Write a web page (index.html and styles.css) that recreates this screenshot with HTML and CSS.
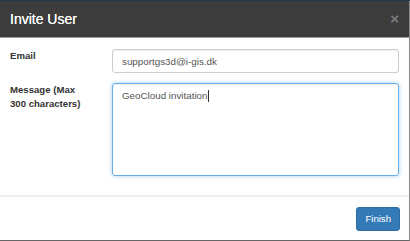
FILE: index.html
```html
<!DOCTYPE html>
<html lang="en">
<head>
  <meta charset="UTF-8" />
  <title>Invite User</title>
  <link rel="stylesheet" href="styles.css">
</head>
<body>
  <div class="modal">
    <div class="modal-header">
      <h4 class="modal-title">Invite User</h4>
      <button class="close" type="button">&times;</button>
    </div>

    <div class="modal-body">
      <div class="form-row">
        <label for="email">Email</label>
        <input type="text" id="email" class="form-control" value="supportgs3d@i-gis.dk" />
      </div>
      <div class="form-row">
        <label for="message">Message (Max 300 characters)</label>
        <div class="form-control textarea focused">GeoCloud invitation<span class="caret"></span></div>
      </div>
    </div>

    <div class="modal-footer">
      <button class="btn-primary" type="button">Finish</button>
    </div>
  </div>
</body>
</html>
```

FILE: styles.css
```css
html, body {
  margin: 0;
  padding: 0;
}

body {
  background: #1e3a55;
  font-family: "Liberation Sans", Arial, sans-serif;
  font-size: 9.6px;
  line-height: 13.7px;
  color: #333;
  width: 410px;
  height: 241px;
  overflow: hidden;
}

.modal {
  margin-top: 1px;
  width: 409px;
  height: 239px;
  background: #fff;
  border-right: 1px solid #8a8a8a;
  border-bottom: 1px solid #666;
  display: flex;
  flex-direction: column;
}

.modal-header {
  height: 36px;
  background: #3c3c3c;
  border-bottom: 1px solid #9a9a9a;
  display: flex;
  align-items: center;
  justify-content: space-between;
  padding: 0 10px;
}

.modal-title {
  margin: 0;
  color: #fff;
  font-size: 14px;
  font-weight: normal;
  line-height: 16px;
  text-shadow: 0 0 0.4px #fff;
}

.close {
  background: none;
  border: none;
  padding: 0;
  color: #7c7c7c;
  font-family: "Liberation Sans", Arial, sans-serif;
  font-size: 15px;
  font-weight: bold;
  line-height: 16px;
}

.modal-body {
  padding: 11px 10px 0 10px;
  display: flex;
  flex-direction: column;
  gap: 10px;
  height: 146px;
  border-bottom: 2px solid #eee;
}

.form-row {
  display: grid;
  grid-template-columns: 102px 1fr;
  align-items: start;
}

.form-row label {
  font-weight: bold;
  padding-right: 20px;
}

.form-control {
  box-sizing: border-box;
  height: 24px;
  margin: 0;
  padding: 0 9px;
  border: 1px solid #ccc;
  border-radius: 3px;
  font-family: "Liberation Sans", Arial, sans-serif;
  font-size: 9.8px;
  color: #555;
  box-shadow: inset 0 1px 1px rgba(0, 0, 0, 0.06);
  width: 100%;
  outline: none;
}

.textarea {
  height: 93px;
  padding: 5px 9px;
  line-height: 13.7px;
  border-color: #66afe9;
  box-shadow: inset 0 1px 1px rgba(0, 0, 0, 0.06), 0 0 4px rgba(102, 175, 233, 0.6);
}

.caret {
  display: inline-block;
  width: 1px;
  height: 12px;
  background: #333;
  vertical-align: -3px;
}

.modal-footer {
  flex: 1;
  display: flex;
  justify-content: flex-end;
  align-items: center;
  padding: 0 9px;
}

.btn-primary {
  background: #337ab7;
  border: 1px solid #2e6da4;
  border-radius: 3px;
  color: #fff;
  font-family: "Liberation Sans", Arial, sans-serif;
  font-size: 9.6px;
  height: 24px;
  padding: 0 8px;
}
```
